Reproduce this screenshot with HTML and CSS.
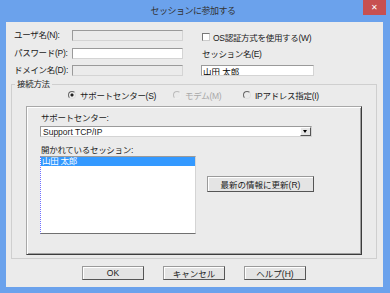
FILE: index.html
```html
<html>
<head>
    <title>セッションに参加する</title>
    <link rel="stylesheet" href="styles.css">
</head>
<body>
    <div class="window">
        <div class="titlebar">
            <span class="title">セッションに参加する</span>
            <span class="close">&#x2715;</span>
        </div>
        <div class="client">
            <div class="top">
                <div class="account">
                    <label>ユーザ名(N):</label>
                    <input type="text" class="edit" disabled>
                    <label>パスワード(P):</label>
                    <input type="password" class="edit">
                    <label>ドメイン名(D):</label>
                    <input type="text" class="edit" disabled>
                </div>
                <div class="session">
                    <label class="check"><input type="checkbox"> OS認証方式を使用する(W)</label>
                    <label class="caption">セッション名(E)</label>
                    <input type="text" class="edit name" value="山田 太郎">
                </div>
            </div>

            <fieldset class="method">
                <legend>接続方法</legend>
                <div class="radios">
                    <label class="opt first"><input type="radio" name="method" checked> サポートセンター(S)</label>
                    <label class="opt second off"><input type="radio" name="method" disabled> モデム(M)</label>
                    <label class="opt"><input type="radio" name="method"> IPアドレス指定(I)</label>
                </div>
                <div class="panel">
                    <label class="caption">サポートセンター:</label>
                    <div class="combo">
                        <span>Support TCP/IP</span>
                        <span class="arrow"></span>
                    </div>
                    <label class="caption list-caption">開かれているセッション:</label>
                    <div class="sessions">
                        <div class="listbox">
                            <div class="item selected">山田 太郎</div>
                        </div>
                        <button class="btn refresh">最新の情報に更新(R)</button>
                    </div>
                </div>
            </fieldset>

            <div class="actions">
                <button class="btn">OK</button>
                <button class="btn">キャンセル</button>
                <button class="btn">ヘルプ(H)</button>
            </div>
        </div>
    </div>
</body>
</html>
```

FILE: styles.css
```css
body {
    margin: 0;
    font-family: "Liberation Sans", "Noto Sans CJK JP", sans-serif;
    font-size: 8.5px;
    letter-spacing: -0.3px;
    color: #1a1a1a;
}
.window {
    width: 390px;
    height: 293px;
    background: #6ba2ec;
}
.titlebar {
    display: grid;
    grid-template-columns: 1fr auto 1fr;
    height: 22px;
    padding-right: 4px;
}
.title {
    grid-column: 2;
    font-size: 9px;
    letter-spacing: -0.5px;
    line-height: 22px;
    color: #333;
}
.close {
    grid-column: 3;
    justify-self: end;
    width: 23px;
    height: 15px;
    background: #c75050;
    color: #fff;
    font-size: 8px;
    line-height: 15px;
    text-align: center;
}
.client {
    margin: 0 7px 0 6px;
    height: 265px;
    background: #ebebeb;
}
.top {
    display: flex;
    gap: 17px;
    padding: 8px 0 0 8px;
}
.account {
    display: grid;
    grid-template-columns: 58px 111px;
    row-gap: 6.5px;
    align-items: center;
}
.account label {
    line-height: 11px;
}
.edit {
    box-sizing: border-box;
    height: 11px;
    margin: 0;
    padding: 0 1px;
    border: 1px solid #9a9a9a;
    border-right-color: #d4d4d4;
    border-bottom-color: #d4d4d4;
    background: #fff;
    font: inherit;
    color: #000;
    outline: none;
}
.edit:disabled {
    background: #ebebeb;
}
.session {
    display: flex;
    flex-direction: column;
}
.check {
    display: flex;
    align-items: center;
    gap: 3px;
    height: 14px;
    margin-left: 2px;
}
.check input {
    appearance: none;
    width: 8px;
    height: 8px;
    margin: 0;
    border: 1px solid #777;
    border-right-color: #ccc;
    border-bottom-color: #ccc;
    background: #fff;
}
.session .caption {
    margin: 5px 0 0 2px;
    line-height: 10px;
}
.name {
    width: 113px;
    margin: 6px 0 0 1px;
}
.method {
    margin: 3px 6px 0 5px;
    padding: 0 14px 3px 14px;
    border: 1px solid #cfcfcf;
}
.method legend {
    margin-left: -11px;
    padding: 0 2px;
    line-height: 10px;
}
.radios {
    display: flex;
    align-items: center;
    height: 12px;
    padding-left: 42px;
}
.opt {
    display: flex;
    align-items: center;
    gap: 4px;
}
.opt.first {
    width: 105px;
}
.opt.second {
    width: 70px;
}
.opt.off {
    color: #a8a8a8;
}
.opt input {
    appearance: none;
    width: 8px;
    height: 8px;
    margin: 0;
    border: 1px solid #666;
    border-right-color: #e0e0e0;
    border-bottom-color: #e0e0e0;
    border-radius: 50%;
    background: transparent;
}
.opt input:checked {
    background: radial-gradient(circle, #222 1.3px, transparent 1.8px);
}
.opt input:disabled {
    border-color: #bbb #eee #eee #bbb;
}
.panel {
    box-sizing: border-box;
    height: 149px;
    margin-top: 5px;
    padding: 6px 0 0 13px;
    border: 1px solid #a8a8a8;
    border-right-color: #3c3c3c;
    border-bottom-color: #3c3c3c;
    box-shadow: inset 1px 1px #fff, inset -1px -1px #a0a0a0;
}
.panel .caption {
    display: block;
    margin-left: 1px;
    line-height: 10px;
}
.combo {
    display: flex;
    align-items: center;
    box-sizing: border-box;
    width: 272px;
    height: 11px;
    margin-top: 3px;
    padding-left: 2px;
    border: 1px solid #9a9a9a;
    border-right-color: #d4d4d4;
    border-bottom-color: #d4d4d4;
    background: #fff;
}
.combo span:first-child {
    flex: 1;
    letter-spacing: 0;
}
.arrow {
    position: relative;
    box-sizing: border-box;
    width: 11px;
    height: 9px;
    border: 1px solid #fff;
    border-right-color: #555;
    border-bottom-color: #555;
    background: #e6e6e6;
}
.arrow::after {
    content: "";
    position: absolute;
    left: 2px;
    top: 2px;
    border-left: 2.5px solid transparent;
    border-right: 2.5px solid transparent;
    border-top: 3px solid #000;
}
.list-caption {
    margin-top: 8px;
}
.sessions {
    display: flex;
    align-items: flex-start;
    margin-top: 1px;
}
.listbox {
    box-sizing: border-box;
    width: 156px;
    height: 78px;
    border: 1px solid #9a9a9a;
    border-left: 1px dotted #7070ff;
    border-right-color: #d4d4d4;
    border-bottom-color: #707070;
    background: #fff;
}
.item {
    height: 9px;
    line-height: 9px;
    padding-left: 1px;
}
.item.selected {
    background: #3399ff;
    color: #fff;
}
.btn {
    box-sizing: border-box;
    margin: 0;
    padding: 0;
    border: 1px solid #9a9a9a;
    border-right-color: #555;
    border-bottom-color: #555;
    box-shadow: inset 1px 1px #fff;
    background: #e4e4e4;
    font: inherit;
    color: #1a1a1a;
}
.refresh {
    width: 107px;
    height: 16px;
    margin: 20px 0 0 11px;
}
.actions {
    display: flex;
    gap: 19px;
    margin-top: 7px;
    padding-left: 76px;
}
.actions .btn {
    width: 62px;
    height: 14px;
}
```
